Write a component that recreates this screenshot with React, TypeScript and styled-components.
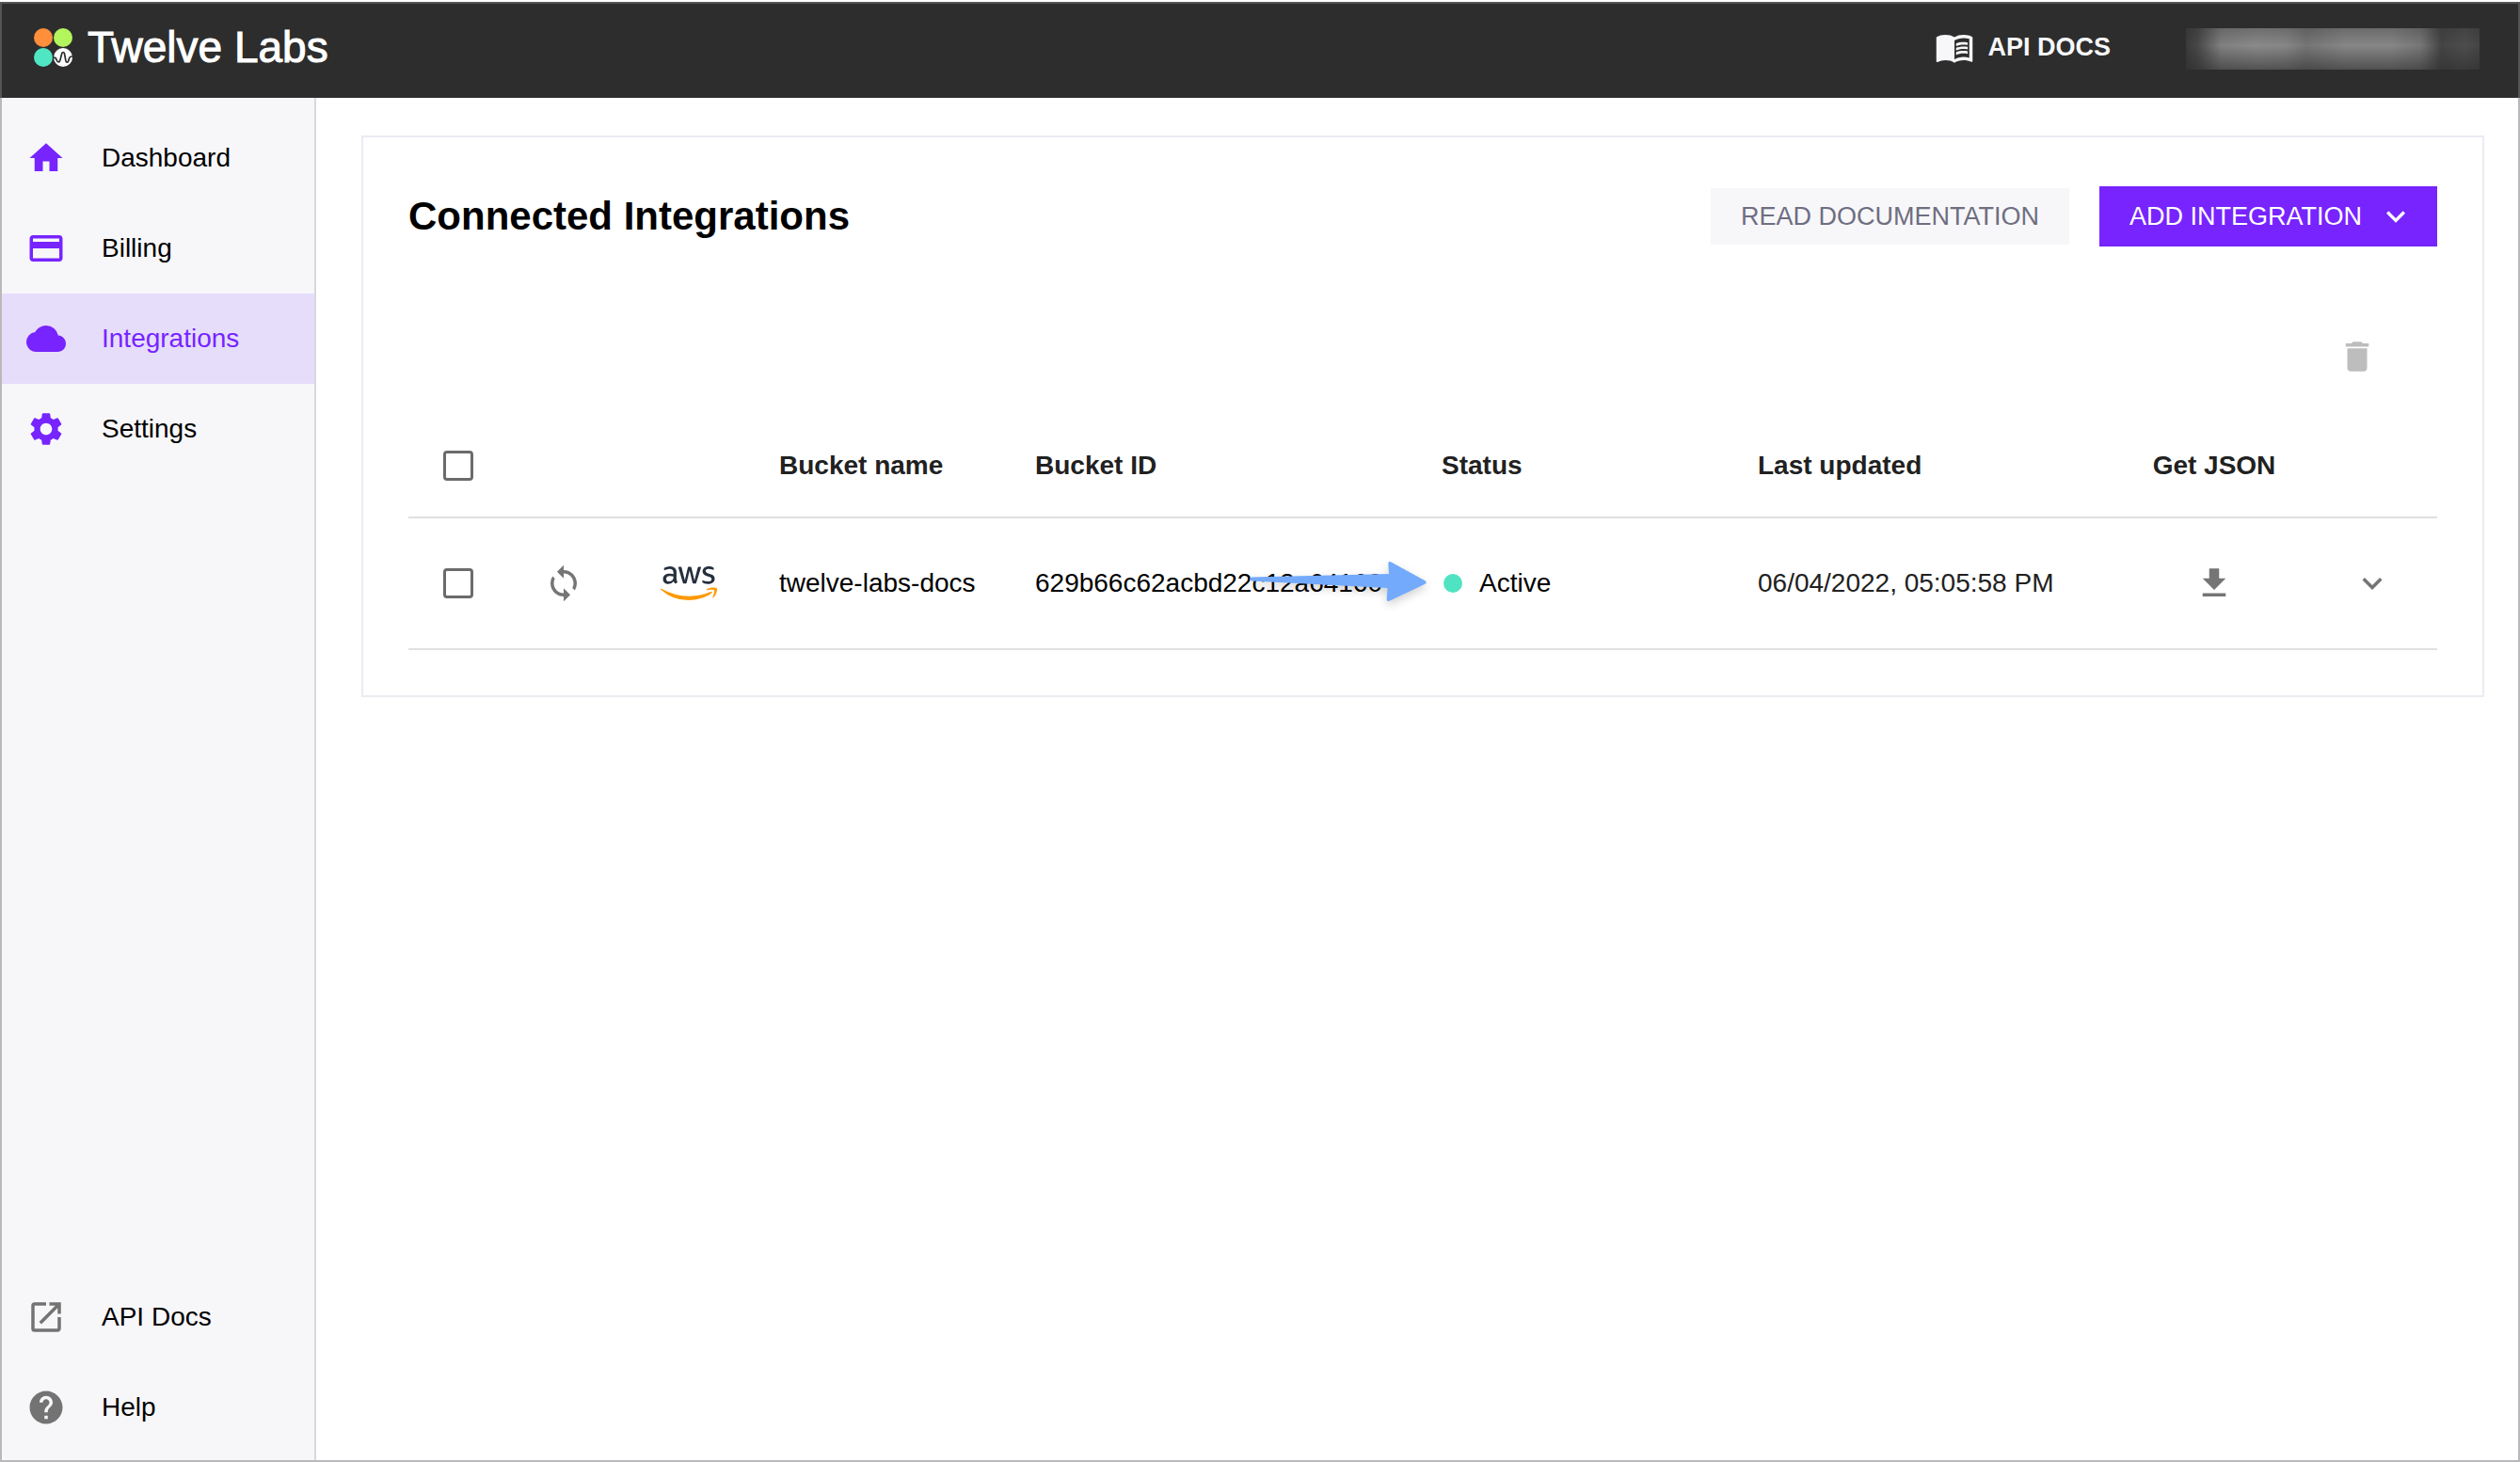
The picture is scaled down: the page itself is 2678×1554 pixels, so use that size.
import React from "react";
import styled, { createGlobalStyle } from "styled-components";
import {
  MdHome,
  MdCreditCard,
  MdCloud,
  MdSettings,
  MdOpenInNew,
  MdHelp,
  MdMenuBook,
  MdDelete,
  MdSync,
  MdFileDownload,
  MdExpandMore,
} from "react-icons/md";
import { FaAws } from "react-icons/fa";

const GlobalStyle = createGlobalStyle`
  *, *::before, *::after { box-sizing: border-box; }
  body {
    margin: 0;
    background: #fff;
    color: #000;
    font-family: "Liberation Sans", Arial, Helvetica, sans-serif;
    font-size: 28px;
    line-height: 32px;
  }
  button, input { font: inherit; color: inherit; }
`;

const Page = styled.div`
  display: flex;
  flex-direction: column;
  min-height: 100vh;
  padding-top: 2px;
`;

const Header = styled.header`
  display: flex;
  align-items: center;
  height: 102px;
  padding: 0 41px 8px 34px;
  background: #2d2d2d;
  border: 2px solid #555;
  border-bottom: 0;
`;

const Brand = styled.a`
  display: flex;
  align-items: center;
  gap: 16px;
  margin-right: auto;
  color: #fff;
  font-size: 46px;
  line-height: 52px;
  text-decoration: none;
  -webkit-text-stroke: 1px #fff;
`;

const DocsLink = styled.a`
  display: flex;
  align-items: center;
  gap: 14px;
  margin-right: 80px;
  color: #f7f7fa;
  font-size: 27px;
  font-weight: 700;
  text-decoration: none;
`;

const Account = styled.button`
  width: 312px;
  height: 44px;
  margin-top: 4px;
  padding: 0;
  border: 0;
  background:
    linear-gradient(rgba(45, 45, 45, 0.3), transparent 42%, rgba(45, 45, 45, 0.6)),
    linear-gradient(
      90deg,
      #3a3a3a,
      #484848 4%,
      #808080 12%,
      #8a8a8a 24%,
      #868686 34%,
      #757575 41%,
      #868686 54%,
      #868686 70%,
      #767676 80%,
      #444 87%,
      #4d4d4d 95%,
      #444
    );
`;

const Body = styled.div`
  display: flex;
  flex: 1;
  border: 2px solid #b9b9bb;
  border-top: 0;
`;

const Sidebar = styled.nav`
  display: flex;
  flex-direction: column;
  justify-content: space-between;
  flex: 0 0 334px;
  padding: 16px 0 8px;
  background: #f7f7fa;
  border-right: 2px solid #d8d8db;
`;

const NavGroup = styled.div`
  display: flex;
  flex-direction: column;
`;

const NavItem = styled.a<{ $active?: boolean; $muted?: boolean }>`
  display: flex;
  align-items: center;
  gap: 38px;
  height: 96px;
  padding-left: 26px;
  background: ${(p) => (p.$active ? "#e6ddfa" : "transparent")};
  color: ${(p) => (p.$active ? "#7724ff" : "#000")};
  text-decoration: none;

  svg {
    color: ${(p) => (p.$muted ? "#737373" : "#7724ff")};
  }
`;

const Main = styled.main`
  flex: 1;
  min-width: 0;
  padding: 40px 36px 40px 48px;
`;

const Card = styled.section`
  padding: 52px 48px 48px;
  border: 2px solid #ebebf2;
`;

const CardHead = styled.div`
  display: flex;
  align-items: center;
  justify-content: space-between;
`;

const Title = styled.h1`
  margin: 0;
  font-size: 42px;
  line-height: 48px;
`;

const Actions = styled.div`
  display: flex;
  align-items: center;
  gap: 32px;
`;

const Button = styled.button<{ $primary?: boolean }>`
  display: flex;
  align-items: center;
  gap: 16px;
  height: ${(p) => (p.$primary ? 64 : 60)}px;
  padding: 0 ${(p) => (p.$primary ? 24 : 32)}px 0 32px;
  border: 0;
  background: ${(p) => (p.$primary ? "#7724ff" : "#f7f7fa")};
  color: ${(p) => (p.$primary ? "#fff" : "#6f6e80")};
  font-size: 27px;
`;

const IconButton = styled.button`
  display: flex;
  padding: 0;
  border: 0;
  background: none;
  color: #757575;

  &:disabled {
    color: #bdbdbd;
  }
`;

const Toolbar = styled.div`
  display: flex;
  justify-content: flex-end;
  padding: 96px 64px 40px 0;
`;

const Table = styled.table`
  width: 100%;
  table-layout: fixed;
  border-collapse: collapse;
`;

const Col = styled.col<{ $width?: number }>`
  width: ${(p) => (p.$width ? `${p.$width}px` : "auto")};
`;

const Row = styled.tr<{ $head?: boolean }>`
  height: ${(p) => (p.$head ? 110 : 140)}px;
  border-bottom: 2px solid #e0e0e0;
`;

const HeadCell = styled.th<{ $center?: boolean }>`
  padding: ${(p) => (p.$center ? "0" : "0 0 0 16px")};
  color: #212121;
  text-align: ${(p) => (p.$center ? "center" : "left")};
`;

const Cell = styled.td<{ $center?: boolean; $soft?: boolean }>`
  position: relative;
  padding: ${(p) => (p.$center ? "0" : "0 0 0 16px")};
  color: ${(p) => (p.$soft ? "#212121" : "#000")};
  text-align: ${(p) => (p.$center ? "center" : "left")};
  white-space: nowrap;

  > button {
    margin: 0 auto;
  }
`;

const Checkbox = styled.input`
  appearance: none;
  display: block;
  width: 32px;
  height: 32px;
  margin: 0 auto;
  border: 3px solid #6b6b6b;
  border-radius: 4px;

  &:checked {
    background: #7724ff;
    border-color: #7724ff;
  }
`;

const AwsLogo = styled(FaAws)`
  width: 60px;
  height: 48px;
  margin-right: 6px;
  vertical-align: middle;

  path {
    fill: url(#aws-ink);
  }
`;

const Defs = styled.svg`
  position: absolute;
`;

const Status = styled.span`
  display: flex;
  align-items: center;
  gap: 18px;
  padding-left: 2px;
`;

const Dot = styled.span`
  width: 20px;
  height: 20px;
  border-radius: 50%;
  background: #50e3c2;
`;

const Pointer = styled.svg`
  position: absolute;
  top: 46px;
  right: -6px;
  z-index: 1;
  pointer-events: none;
  filter: drop-shadow(0 4px 5px rgba(0, 0, 0, 0.18));
`;

const BrandMark = () => (
  <svg width="41" height="41" viewBox="0 0 41 41" aria-hidden="true">
    <circle cx="10" cy="10" r="10" fill="#ff8f3a" />
    <circle cx="31" cy="10" r="10" fill="#b3f55c" />
    <circle cx="10" cy="31" r="10" fill="#50e6c3" />
    <circle cx="31" cy="31" r="10" fill="#fff" />
    <path
      d="M20.5 31c2.4 0 2.8.4 3.8 3s3 2.5 3.6 0l1.8-7c.5-2 2.3-2 2.8 0l1.4 7.5c.5 2.3 2.4 2 2.9 0l.9-3c.5-1.5 1.500-1.500 3.800-1.500"
      fill="none"
      stroke="#2d2d2d"
      strokeWidth="1.7"
      strokeLinecap="round"
    />
  </svg>
);

const mainLinks = [
  { label: "Dashboard", Icon: MdHome },
  { label: "Billing", Icon: MdCreditCard },
  { label: "Integrations", Icon: MdCloud, active: true },
  { label: "Settings", Icon: MdSettings },
];

const supportLinks = [
  { label: "API Docs", Icon: MdOpenInNew },
  { label: "Help", Icon: MdHelp },
];

const integrations = [
  {
    name: "twelve-labs-docs",
    id: "629b66c62acbd22c12a64160",
    status: "Active",
    updated: "06/04/2022, 05:05:58 PM",
  },
];

export default function App() {
  return (
    <>
      <GlobalStyle />
      <Page>
        <Header>
          <Brand href="#">
            <BrandMark />
            Twelve Labs
          </Brand>
          <DocsLink href="#">
            <MdMenuBook size={42} />
            API DOCS
          </DocsLink>
          <Account aria-label="Account" />
        </Header>
        <Body>
          <Sidebar>
            <NavGroup>
              {mainLinks.map(({ label, Icon, active }) => (
                <NavItem key={label} href="#" $active={active}>
                  <Icon size={42} />
                  {label}
                </NavItem>
              ))}
            </NavGroup>
            <NavGroup>
              {supportLinks.map(({ label, Icon }) => (
                <NavItem key={label} href="#" $muted>
                  <Icon size={42} />
                  {label}
                </NavItem>
              ))}
            </NavGroup>
          </Sidebar>
          <Main>
            <Card>
              <CardHead>
                <Title>Connected Integrations</Title>
                <Actions>
                  <Button>READ DOCUMENTATION</Button>
                  <Button $primary>
                    ADD INTEGRATION
                    <MdExpandMore size={40} />
                  </Button>
                </Actions>
              </CardHead>
              <Toolbar>
                <IconButton disabled aria-label="Delete">
                  <MdDelete size={42} />
                </IconButton>
              </Toolbar>
              <Defs width="0" height="0" aria-hidden="true">
                <linearGradient id="aws-ink" x1="0" y1="0" x2="0" y2="1">
                  <stop offset="0.61" stopColor="#252f3e" />
                  <stop offset="0.61" stopColor="#ff9900" />
                </linearGradient>
              </Defs>
              <Table>
                <colgroup>
                  <Col $width={106} />
                  <Col $width={118} />
                  <Col $width={154} />
                  <Col $width={272} />
                  <Col $width={432} />
                  <Col $width={336} />
                  <Col />
                  <Col $width={198} />
                  <Col $width={138} />
                </colgroup>
                <thead>
                  <Row $head>
                    <HeadCell $center>
                      <Checkbox type="checkbox" aria-label="Select all integrations" />
                    </HeadCell>
                    <HeadCell />
                    <HeadCell />
                    <HeadCell>Bucket name</HeadCell>
                    <HeadCell>Bucket ID</HeadCell>
                    <HeadCell>Status</HeadCell>
                    <HeadCell>Last updated</HeadCell>
                    <HeadCell $center>Get JSON</HeadCell>
                    <HeadCell />
                  </Row>
                </thead>
                <tbody>
                  {integrations.map((item) => (
                    <Row key={item.id}>
                      <Cell $center>
                        <Checkbox type="checkbox" aria-label={`Select ${item.name}`} />
                      </Cell>
                      <Cell $center>
                        <IconButton aria-label="Sync">
                          <MdSync size={42} />
                        </IconButton>
                      </Cell>
                      <Cell $center>
                        <AwsLogo />
                      </Cell>
                      <Cell>{item.name}</Cell>
                      <Cell>
                        {item.id}
                        <Pointer width="200" height="60" viewBox="0 0 200 60" aria-hidden="true">
                          <path
                            d="M8 16.5 L154 13 L153.3 2 Q153.3 -1 156 .3 L192 20 Q195.5 22 192 24 L155 41.5 Q151.5 43 151.7 40 L152.5 28 L8 20.5 Q4 18.5 8 16.5Z"
                            fill="#73aafc"
                          />
                        </Pointer>
                      </Cell>
                      <Cell>
                        <Status>
                          <Dot />
                          {item.status}
                        </Status>
                      </Cell>
                      <Cell $soft>{item.updated}</Cell>
                      <Cell $center>
                        <IconButton aria-label="Download JSON">
                          <MdFileDownload size={42} />
                        </IconButton>
                      </Cell>
                      <Cell $center>
                        <IconButton aria-label="Show details">
                          <MdExpandMore size={42} />
                        </IconButton>
                      </Cell>
                    </Row>
                  ))}
                </tbody>
              </Table>
            </Card>
          </Main>
        </Body>
      </Page>
    </>
  );
}
